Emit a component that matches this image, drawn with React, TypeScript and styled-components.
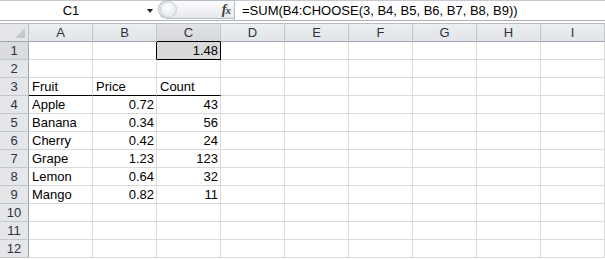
import styled, { createGlobalStyle } from "styled-components";

const Global = createGlobalStyle`
  html, body {
    margin: 0;
    padding: 0;
    background: #fff;
  }
`;

const Sheet = styled.div`
  width: 605px;
  height: 259px;
  overflow: hidden;
  font-family: "Liberation Sans", Arial, sans-serif;
  font-size: 13px;
  color: #000;
  background: #fff;
`;

const FormulaBar = styled.div`
  display: flex;
  height: 21px;
  box-sizing: border-box;
  border-top: 1px solid #c6cad0;
  border-bottom: 1px solid #a9b0b8;
`;

const NameBox = styled.div`
  width: 158px;
  display: flex;
  align-items: center;
  .name {
    width: 142px;
    text-align: center;
  }
  .arrow {
    width: 0;
    height: 0;
    border-left: 3.5px solid transparent;
    border-right: 3.5px solid transparent;
    border-top: 4px solid #222;
    margin-left: 5px;
    margin-top: 1px;
  }
`;

const Pill = styled.div`
  width: 76px;
  height: 19px;
  margin-top: -1px;
  box-sizing: border-box;
  border: 1px solid #b5bbc2;
  border-right: none;
  border-radius: 10px 0 0 10px;
  background: linear-gradient(#fbfbfc, #e7e9ec);
  display: flex;
  align-items: center;
  justify-content: space-between;
  padding-left: 1px;
  padding-right: 4px;
  .knob {
    width: 15px;
    height: 15px;
    border-radius: 50%;
    border: 1px solid #c9cdd2;
    background: radial-gradient(circle at 45% 40%, #ffffff 0%, #eceef1 55%, #d4d7dc 100%);
  }
`;

const Fx = styled.div`
  font-family: "Liberation Serif", "Times New Roman", serif;
  font-style: italic;
  font-weight: bold;
  color: #3c3c3c;
  font-size: 14px;
  letter-spacing: -1px;
  span {
    font-size: 11px;
  }
`;

const FormulaInput = styled.div`
  flex: 1;
  border-left: 1px solid #b5bbc2;
  padding-left: 7px;
  display: flex;
  align-items: center;
  white-space: nowrap;
`;

const Gap = styled.div`
  height: 2px;
  border-bottom: 1px solid #b9bec5;
`;

const Grid = styled.div`
  display: grid;
  grid-template-columns: 29px repeat(9, 64px);
  grid-auto-rows: 18px;
`;

const Corner = styled.div`
  background: #e4e6ea;
  border-right: 1px solid #b9bec5;
  border-bottom: 1px solid #9ea6b0;
  box-sizing: border-box;
  position: relative;
  &::after {
    content: "";
    position: absolute;
    right: 3px;
    bottom: 3px;
    width: 0;
    height: 0;
    border-left: 10px solid transparent;
    border-bottom: 10px solid #c4c8ce;
  }
`;

const ColHead = styled.div<{ $sel?: boolean }>`
  background: ${(p) => (p.$sel ? "linear-gradient(#e2e3e5, #d6d8db)" : "linear-gradient(#eceef1, #e1e4e8)")};
  border-right: 1px solid #c3c7cc;
  border-bottom: 1px solid ${(p) => (p.$sel ? "#000" : "#9ea6b0")};
  box-sizing: border-box;
  display: flex;
  align-items: center;
  justify-content: center;
  color: #2c3440;
`;

const RowHead = styled.div<{ $sel?: boolean }>`
  background: ${(p) => (p.$sel ? "#dadcdf" : "#e4e6ea")};
  border-right: 1px solid #9ea6b0;
  border-bottom: 1px solid #c3c7cc;
  box-sizing: border-box;
  display: flex;
  align-items: center;
  justify-content: center;
  color: #2c3440;
`;

const Cell = styled.div<{ $right?: boolean; $rb?: string; $bb?: string; $fill?: string }>`
  box-sizing: border-box;
  border-right: 1px solid ${(p) => p.$rb || "#dadada"};
  border-bottom: 1px solid ${(p) => p.$bb || "#dadada"};
  background: ${(p) => p.$fill || "#fff"};
  padding: 0 2px 0 3px;
  display: flex;
  align-items: center;
  justify-content: ${(p) => (p.$right ? "flex-end" : "flex-start")};
  white-space: nowrap;
  overflow: hidden;
`;

const cols = ["A", "B", "C", "D", "E", "F", "G", "H", "I"];

const fruits: [string, string, string][] = [
  ["Apple", "0.72", "43"],
  ["Banana", "0.34", "56"],
  ["Cherry", "0.42", "24"],
  ["Grape", "1.23", "123"],
  ["Lemon", "0.64", "32"],
  ["Mango", "0.82", "11"],
];

type CellData = { text?: string; right?: boolean; rb?: string; bb?: string; fill?: string };

function buildRows(): CellData[][] {
  const rows: CellData[][] = [];
  for (let r = 1; r <= 12; r++) {
    rows.push(cols.map(() => ({})));
  }
  // C1 is the active cell, boxed in black
  rows[0][1].rb = "#000";
  rows[0][2] = { text: "1.48", right: true, rb: "#000", bb: "#000", fill: "#d9d9d9" };
  // table header on row 3
  rows[2][0] = { text: "Fruit", bb: "#000" };
  rows[2][1] = { text: "Price", bb: "#000" };
  rows[2][2] = { text: "Count", bb: "#000" };
  fruits.forEach((f, i) => {
    rows[3 + i][0] = { text: f[0] };
    rows[3 + i][1] = { text: f[1], right: true };
    rows[3 + i][2] = { text: f[2], right: true };
  });
  return rows;
}

export default function App() {
  const rows = buildRows();
  return (
    <Sheet>
      <Global />
      <FormulaBar>
        <NameBox>
          <div className="name">C1</div>
          <div className="arrow" />
        </NameBox>
        <Pill>
          <div className="knob" />
          <Fx>
            f<span>x</span>
          </Fx>
        </Pill>
        <FormulaInput>=SUM(B4:CHOOSE(3, B4, B5, B6, B7, B8, B9))</FormulaInput>
      </FormulaBar>
      <Gap />
      <Grid>
        <Corner />
        {cols.map((c) => (
          <ColHead key={c} $sel={c === "C"}>
            {c}
          </ColHead>
        ))}
        {rows.map((row, ri) => [
          <RowHead key={"h" + ri} $sel={ri === 0}>
            {ri + 1}
          </RowHead>,
          ...row.map((cell, ci) => (
            <Cell key={ri + "-" + ci} $right={cell.right} $rb={cell.rb} $bb={cell.bb} $fill={cell.fill}>
              {cell.text}
            </Cell>
          )),
        ])}
      </Grid>
    </Sheet>
  );
}
